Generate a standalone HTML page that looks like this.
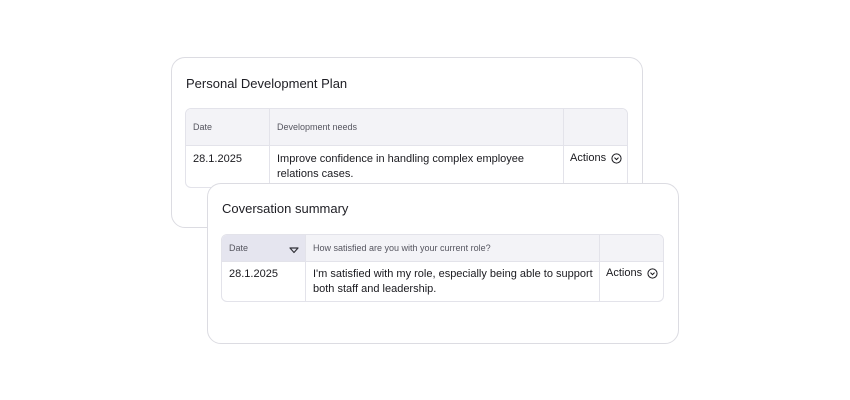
<!DOCTYPE html>
<html><head><style>
*{margin:0;padding:0;box-sizing:border-box}
body{width:850px;height:400px;background:#fff;position:relative;font-family:"Liberation Sans",sans-serif;color:#1a1a1f;overflow:hidden}
.card{position:absolute;background:#fff;border:1px solid #dcdce2;border-radius:14px}
.title{position:absolute;font-size:13px;color:#1e1e24}
.tbl{position:absolute;border:1px solid #e3e3ea;border-radius:6px;overflow:hidden;background:#fff}
.hdr{position:absolute;left:0;right:0;top:0;background:#f3f3f7;border-bottom:1px solid #e3e3ea}
.vl{position:absolute;top:0;bottom:0;width:1px;background:#e3e3ea}
.h{position:absolute;font-size:9px;color:#55555f}
.t{position:absolute;font-size:11px;line-height:15px;color:#1a1a1f}
.act{position:absolute;font-size:11px;color:#1a1a1f}
.act svg{position:absolute;top:1px}
</style></head><body>
<div class="card" style="left:171px;top:57px;width:472px;height:171px">
  <div class="title" style="left:14px;top:18px">Personal Development Plan</div>
  <div class="tbl" style="left:13px;top:50px;width:443px;height:80px">
    <div class="hdr" style="height:37px"></div>
    <div class="vl" style="left:83px"></div>
    <div class="vl" style="left:377px"></div>
    <div class="h" style="left:7px;top:13px">Date</div>
    <div class="h" style="left:91px;top:13px">Development needs</div>
    <div class="t" style="left:7px;top:43px">28.1.2025</div>
    <div class="t" style="left:91px;top:43px;width:280px">Improve confidence in handling complex employee relations cases.</div>
    <div class="act" style="left:384px;top:43px">Actions<svg style="left:41px" width="11" height="11" viewBox="0 0 12 12"><circle cx="6" cy="6" r="5" fill="none" stroke="#1a1a1f" stroke-width="1.1"/><path d="M3.8 5 L6 7.2 L8.2 5" fill="none" stroke="#1a1a1f" stroke-width="1.1"/></svg></div>
  </div>
</div>
<div class="card" style="left:207px;top:183px;width:472px;height:161px">
  <div class="title" style="left:14px;top:17px">Coversation summary</div>
  <div class="tbl" style="left:13px;top:50px;width:443px;height:68px">
    <div class="hdr" style="height:27px"></div>
    <div style="position:absolute;left:0;top:0;width:83px;height:26px;background:#e5e5ef"></div>
    <div class="vl" style="left:83px"></div>
    <div class="vl" style="left:377px"></div>
    <div class="h" style="left:7px;top:8px">Date</div>
    <svg style="position:absolute;left:67px;top:12px" width="10" height="7" viewBox="0 0 10 7"><path d="M1 1 H9 L5 5.5 Z" fill="none" stroke="#33333a" stroke-width="1.2" stroke-linejoin="round"/></svg>
    <div class="h" style="left:91px;top:8px">How satisfied are you with your current role?</div>
    <div class="t" style="left:7px;top:32px">28.1.2025</div>
    <div class="t" style="left:91px;top:32px;width:285px">I'm satisfied with my role, especially being able to support both staff and leadership.</div>
    <div class="act" style="left:384px;top:32px">Actions<svg style="left:41px" width="11" height="11" viewBox="0 0 12 12"><circle cx="6" cy="6" r="5" fill="none" stroke="#1a1a1f" stroke-width="1.1"/><path d="M3.8 5 L6 7.2 L8.2 5" fill="none" stroke="#1a1a1f" stroke-width="1.1"/></svg></div>
  </div>
</div>
</body></html>
